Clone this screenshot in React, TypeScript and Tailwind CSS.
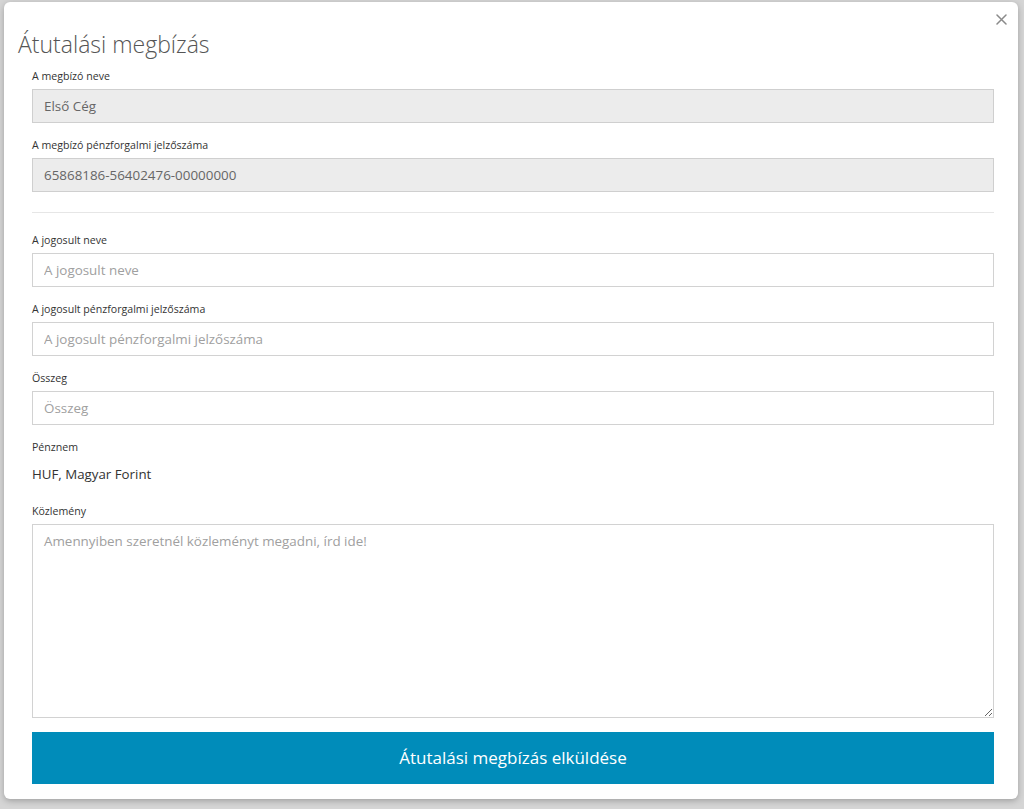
import React from "react";

const font = { fontFamily: '"Open Sans", "Noto Sans", sans-serif' };

function Label({ children }: { children: React.ReactNode }) {
  return <div className="text-[10.6px] leading-[15px] mb-[5px] text-[#333]">{children}</div>;
}

export default function App() {
  return (
    <div className="w-full h-[809px] bg-[#d5d5d5] pt-[2px] pl-[4px] pr-[6px]" style={font}>
      <div className="relative bg-white rounded-[6px] h-[797px] shadow-[0_2px_6px_rgba(0,0,0,0.25)]">
        <button className="absolute right-[10px] top-[10px] w-[14px] h-[14px] flex items-center justify-center">
          <svg width="11" height="11" viewBox="0 0 11 11">
            <path d="M1 1 L10 10 M10 1 L1 10" stroke="#8a8a8a" strokeWidth="1.5" strokeLinecap="round" />
          </svg>
        </button>
        <div className="pt-[27px] pl-[14px] text-[23px] leading-[30px] font-light text-[#555]">Átutalási megbízás</div>
        <div className="pl-[28px] pr-[24px] mt-[10px]">
          <div className="mb-[15px]">
            <Label>A megbízó neve</Label>
            <input
              disabled
              value="Első Cég"
              readOnly
              className="w-full h-[34px] px-[11px] bg-[#ececec] border border-[#cfcfcf] text-[13.4px] text-[#666]"
            />
          </div>
          <div>
            <Label>A megbízó pénzforgalmi jelzőszáma</Label>
            <input
              disabled
              value="65868186-56402476-00000000"
              readOnly
              className="w-full h-[34px] px-[11px] bg-[#ececec] border border-[#cfcfcf] text-[13.4px] text-[#666]"
            />
          </div>
          <div className="my-[20px] h-px bg-[#e6e6e6]" />
          <div className="mb-[15px]">
            <Label>A jogosult neve</Label>
            <input
              placeholder="A jogosult neve"
              className="w-full h-[34px] px-[11px] bg-white border border-[#d2d2d2] text-[13.4px] text-[#555] placeholder:text-[#a0a0a0] outline-none"
            />
          </div>
          <div className="mb-[15px]">
            <Label>A jogosult pénzforgalmi jelzőszáma</Label>
            <input
              placeholder="A jogosult pénzforgalmi jelzőszáma"
              className="w-full h-[34px] px-[11px] bg-white border border-[#d2d2d2] text-[13.4px] text-[#555] placeholder:text-[#a0a0a0] outline-none"
            />
          </div>
          <div className="mb-[15px]">
            <Label>Összeg</Label>
            <input
              placeholder="Összeg"
              className="w-full h-[34px] px-[11px] bg-white border border-[#d2d2d2] text-[13.4px] text-[#555] placeholder:text-[#a0a0a0] outline-none"
            />
          </div>
          <div className="mb-[15px]">
            <Label>Pénznem</Label>
            <div className="text-[13.3px] leading-[29px] text-[#333]">HUF, Magyar Forint</div>
          </div>
          <div>
            <Label>Közlemény</Label>
            <textarea
              placeholder="Amennyiben szeretnél közleményt megadni, írd ide!"
              className="block w-full h-[194px] px-[11px] py-[6px] bg-white border border-[#d2d2d2] text-[13.4px] leading-[20px] text-[#555] placeholder:text-[#a0a0a0] outline-none"
            />
          </div>
          <button className="mt-[14px] w-full h-[52px] bg-[#008cba] text-white text-[17px]">
            Átutalási megbízás elküldése
          </button>
        </div>
      </div>
    </div>
  );
}
